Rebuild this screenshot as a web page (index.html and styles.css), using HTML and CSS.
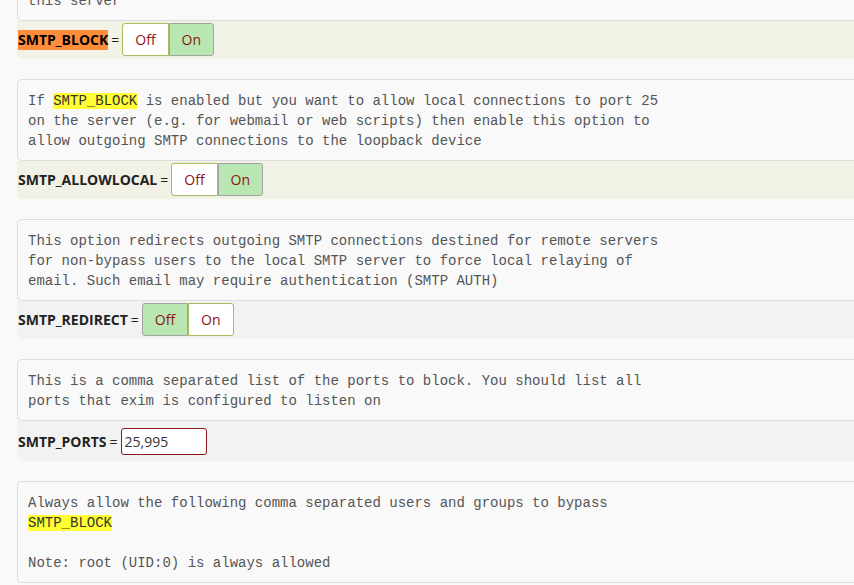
FILE: index.html
```html
<!DOCTYPE html>
<html lang="en">
  <head>
    <meta charset="UTF-8" />
    <title>SMTP Settings</title>
    <link rel="stylesheet" href="styles.css">
  </head>
  <body>
    <main class="options">
      <section class="option">
        <div class="comment">Note: Run /etc/csf/csftest.pl to check whether this option will function on
this server</div>
        <div class="setting on">
          <span class="name mark-orange">SMTP_BLOCK</span> =
          <div class="toggle">
            <span class="btn">Off</span><span class="btn active">On</span>
          </div>
        </div>
      </section>

      <section class="option">
        <div class="comment">If <span class="mark">SMTP_BLOCK</span> is enabled but you want to allow local connections to port 25
on the server (e.g. for webmail or web scripts) then enable this option to
allow outgoing SMTP connections to the loopback device</div>
        <div class="setting on">
          <span class="name">SMTP_ALLOWLOCAL</span> =
          <div class="toggle">
            <span class="btn">Off</span><span class="btn active">On</span>
          </div>
        </div>
      </section>

      <section class="option">
        <div class="comment">This option redirects outgoing SMTP connections destined for remote servers
for non-bypass users to the local SMTP server to force local relaying of
email. Such email may require authentication (SMTP AUTH)</div>
        <div class="setting">
          <span class="name">SMTP_REDIRECT</span> =
          <div class="toggle">
            <span class="btn active">Off</span><span class="btn">On</span>
          </div>
        </div>
      </section>

      <section class="option">
        <div class="comment">This is a comma separated list of the ports to block. You should list all
ports that exim is configured to listen on</div>
        <div class="setting text">
          <span class="name">SMTP_PORTS</span> =
          <input class="field" type="text" value="25,995" />
        </div>
      </section>

      <section class="option">
        <div class="comment">Always allow the following comma separated users and groups to bypass
<span class="mark">SMTP_BLOCK</span>

Note: root (UID:0) is always allowed</div>
      </section>
    </main>
  </body>
</html>
```

FILE: styles.css
```css
* {
  box-sizing: border-box;
}
html,
body {
  margin: 0;
  height: 100%;
  overflow: hidden;
}
body {
  background: #f9f9f9;
  font-family: "Open Sans", sans-serif;
  font-size: 14px;
  color: #222;
}
.options {
  width: 920px;
  margin-top: -41px;
  padding-left: 17px;
}
.option {
  margin-bottom: 20px;
}
.comment {
  white-space: pre;
  font-family: "Liberation Mono", monospace;
  font-size: 14px;
  line-height: 20px;
  color: #555;
  background: #f9f9f9;
  border: 1px solid #dcdcdc;
  border-radius: 5px;
  padding: 11px 10px 9px;
}
.mark {
  background: #ffff33;
  color: #333;
}
.setting {
  display: flex;
  align-items: center;
  gap: 3px;
  padding: 2px 1px 3px;
  background: #f2f2f2;
  border-radius: 0 0 0 6px;
}
.setting.on {
  background: #f2f1e5;
}
.setting.text {
  padding: 7px 1px 6px;
}
.name {
  font-weight: bold;
  line-height: 20px;
}
.mark-orange {
  background: #ff8c3a;
  color: #000;
}
.toggle {
  display: flex;
}
.btn {
  padding: 6px 12px;
  line-height: 19px;
  color: #8b1414;
  background: #fff;
  border: 1px solid #a9bb5c;
}
.btn.active {
  background: #b9e7b3;
  border-color: #a3a3a3;
}
.btn:first-child {
  border-radius: 3px 0 0 3px;
}
.btn:last-child {
  border-radius: 0 3px 3px 0;
}
.field {
  width: 86px;
  height: 27px;
  padding: 0 3px;
  font-family: "Open Sans", sans-serif;
  font-size: 14px;
  color: #333;
  background: #fff;
  border: 1px solid #8b1a1a;
  border-radius: 3px;
  outline: none;
}
```
